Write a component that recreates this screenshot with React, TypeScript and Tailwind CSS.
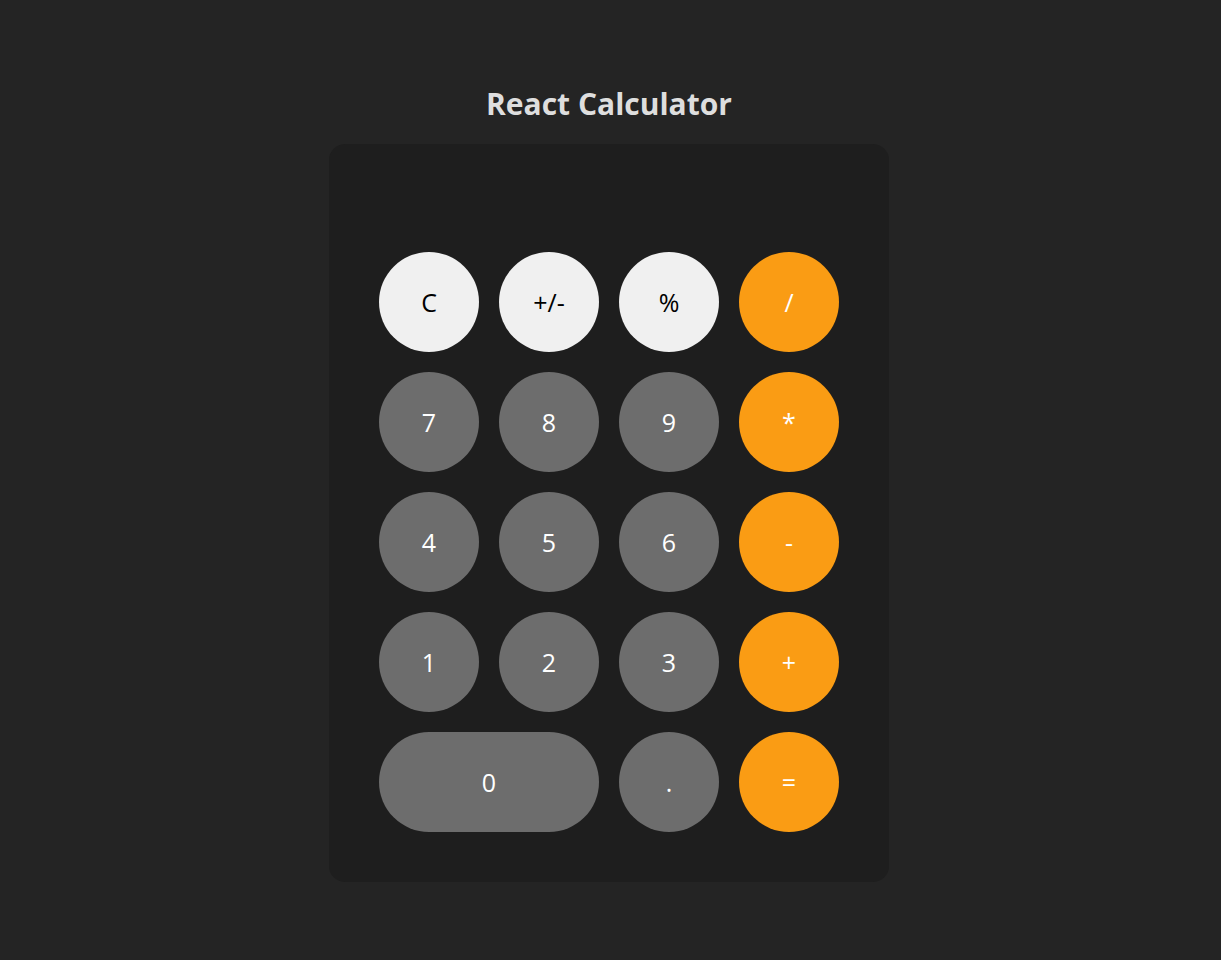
const rows: { label: string; kind: "light" | "gray" | "orange"; wide?: boolean }[][] = [
  [
    { label: "C", kind: "light" },
    { label: "+/-", kind: "light" },
    { label: "%", kind: "light" },
    { label: "/", kind: "orange" },
  ],
  [
    { label: "7", kind: "gray" },
    { label: "8", kind: "gray" },
    { label: "9", kind: "gray" },
    { label: "*", kind: "orange" },
  ],
  [
    { label: "4", kind: "gray" },
    { label: "5", kind: "gray" },
    { label: "6", kind: "gray" },
    { label: "-", kind: "orange" },
  ],
  [
    { label: "1", kind: "gray" },
    { label: "2", kind: "gray" },
    { label: "3", kind: "gray" },
    { label: "+", kind: "orange" },
  ],
  [
    { label: "0", kind: "gray", wide: true },
    { label: ".", kind: "gray" },
    { label: "=", kind: "orange" },
  ],
];

const kindClass = {
  light: "bg-[#f0f0f0] text-black",
  gray: "bg-[#6d6d6d] text-white",
  orange: "bg-[#fa9c14] text-white",
};

export default function App() {
  return (
    <div className="min-h-screen bg-[#242424] pr-[3px] flex flex-col items-center font-['Open_Sans','Noto_Sans',sans-serif]">
      <h1 className="mt-[84px] mb-[20px] text-[30px] leading-[40px] font-bold text-[#dedede]">React Calculator</h1>
      <div className="w-[560px] rounded-2xl bg-[#1e1e1e] p-[50px]">
        <div className="h-[38px] mb-[20px] text-right text-white text-[32px]"></div>
        <div className="grid grid-cols-4 gap-[20px]">
          {rows.flat().map((b) => (
            <button
              key={b.label}
              className={`h-[100px] pt-[2px] rounded-full text-[25px] flex items-center justify-center ${b.wide ? "col-span-2 w-[220px]" : "w-[100px]"} ${kindClass[b.kind]}`}
            >
              {b.label}
            </button>
          ))}
        </div>
      </div>
    </div>
  );
}
